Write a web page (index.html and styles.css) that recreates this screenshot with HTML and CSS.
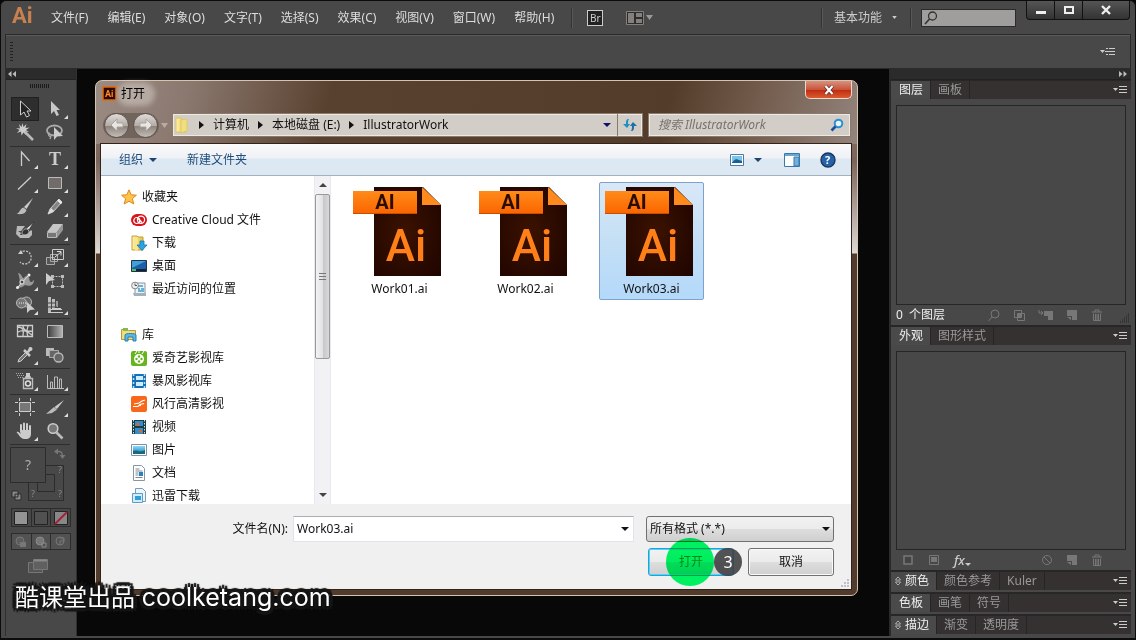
FILE: index.html
```html
<!DOCTYPE html>
<html lang="zh-CN">
<head>
<meta charset="utf-8">
<title>Illustrator - 打开</title>
<link rel="stylesheet" href="styles.css">
</head>
<body>
<svg class="defs" aria-hidden="true">
  <defs>
    <linearGradient id="g-orange" x1="0" y1="0" x2="0" y2="1"><stop offset="0" stop-color="#ff8b1a"/><stop offset="1" stop-color="#fb6400"/></linearGradient>
    <radialGradient id="g-brown" cx=".45" cy=".5" r=".7"><stop offset="0" stop-color="#3b1200"/><stop offset="1" stop-color="#200500"/></radialGradient>
    <linearGradient id="g-grey" x1="0" y1="0" x2="1" y2="0"><stop offset="0" stop-color="#3c3c3c"/><stop offset="1" stop-color="#b5b5b5"/></linearGradient>
    <linearGradient id="g-sky" x1="0" y1="0" x2="0" y2="1"><stop offset="0" stop-color="#8fd8f8"/><stop offset="1" stop-color="#1678b8"/></linearGradient>
    <linearGradient id="g-folder" x1="0" y1="0" x2="1" y2="0"><stop offset="0" stop-color="#fdf3b0"/><stop offset="1" stop-color="#e5bf45"/></linearGradient>
    <symbol id="ai-file" viewBox="0 0 88 91">
      <path d="M21 1h49l18 18v71H21z" fill="url(#g-brown)"/>
      <path d="M69 1l19 18H69z" fill="#ff8a1e"/>
      <path d="M0 5h64v23H0z" fill="url(#g-orange)"/>
      <path d="M0 27.500h64" stroke="#c25000"/>
      <text x="32" y="23" class="file-tag">AI</text>
      <text x="53" y="75" class="file-mark">Ai</text>
    </symbol>
    <symbol id="panel-menu" viewBox="0 0 14 10"><path d="M0 3h5L2.500 6z" fill="#ccc"/><path d="M6 1.500h8M6 4.500h8M6 7.500h8" stroke="#ccc"/></symbol>
    <symbol id="new-item" viewBox="0 0 12 12"><path d="M1 1h10v10H6V7H1z" fill="#777"/><path d="M1 8h4v3z" fill="#777"/></symbol>
    <symbol id="trash" viewBox="0 0 12 12"><path d="M1 3h10M4 3V1h4v2M2.500 4.500v7h7v-7M4.500 5v6M6 5v6M7.500 5v6" fill="none" stroke="#777"/></symbol>
    <symbol id="updown" viewBox="0 0 6 12"><path d="M.5 5L3 2l2.500 3zM.5 7L3 10l2.500-3z" fill="#222" stroke="#bbb"/></symbol>
  </defs>
</svg>
<div class="app">
  <header class="menubar">
    <span class="logo">Ai</span>
    <nav class="menus">
      <button>文件(F)</button><button>编辑(E)</button><button>对象(O)</button><button>文字(T)</button><button>选择(S)</button><button>效果(C)</button><button>视图(V)</button><button>窗口(W)</button><button>帮助(H)</button>
    </nav>
    <span class="divider"></span>
    <button class="bridge">Br</button>
    <button class="arrange" aria-label="排列文档">
      <svg width="28" height="16" viewBox="0 0 28 16"><path d="M.5 1.500h17v13H.5z" fill="#2d2d2d" stroke="#85807c"/><path d="M2 3h6v10H2zM10 3h6v4h-6zM10 9h6v4h-6z" fill="#85807c"/><path d="M20 5h7l-3.500 5z" fill="#999"/></svg>
    </button>
    <span class="spacer"></span>
    <span class="divider"></span>
    <button class="workspace-switch">基本功能<svg width="5" height="3" viewBox="0 0 6 4"><path d="M0 0h6L3 4z" fill="#ccc"/></svg></button>
    <span class="divider"></span>
    <label class="help-search">
      <svg width="14" height="14" viewBox="0 0 14 14"><circle cx="8.500" cy="5" r="4" fill="none" stroke="#333" stroke-width="1.300"/><path d="M5.500 8L1 13" stroke="#333" stroke-width="1.600"/></svg>
      <input type="search" aria-label="搜索帮助">
    </label>
    <div class="winbtns">
      <button aria-label="最小化"><svg width="12" height="12"><path d="M1 7h10v3H1z" fill="#eee"/></svg></button>
      <button aria-label="最大化"><svg width="12" height="12"><path d="M2 3h8v6H2z" fill="none" stroke="#eee" stroke-width="2"/></svg></button>
      <button class="wide" aria-label="关闭"><svg width="12" height="12"><path d="M2 2l8 8M10 2l-8 8" stroke="#eee" stroke-width="2.400"/></svg></button>
    </div>
  </header>
  <div class="control-bar">
    <span class="grip-v"></span>
    <button aria-label="控制面板菜单"><svg width="15" height="10" viewBox="0 0 15 10"><path d="M0 3h5L2.500 6z" fill="#ccc"/><path d="M5 4.500h4M9 1.500h6M9 4.500h6M9 7.500h6" stroke="#ccc"/><path d="M6 1h2v1H6zM6 7h2v1H6z" fill="#ccc"/></svg></button>
  </div>
  <div class="workspace">
    <aside class="tools">
      <div class="collapse left"><svg width="8" height="6" viewBox="0 0 8 6"><path d="M3.500 0v6L0 3zM8 0v6L4.500 3z" fill="#bbb"/></svg></div>
      <span class="grip-h"></span>
      <div class="tool-group">
        <button class="tool selected" aria-label="选择工具"><svg viewBox="0 0 20 20"><path d="M5.500 2v14l3.500-3 2.500 5 3-1.500-2.500-4.500H16z" fill="#222" stroke="#d0d0d0"/></svg></button>
        <button class="tool more" aria-label="直接选择工具"><svg viewBox="0 0 20 20"><path d="M6 2v13l3-3 2.500 5 2.500-1-2.500-5H15z" fill="#c8c8c8"/></svg></button>
        <button class="tool" aria-label="魔棒工具"><svg viewBox="0 0 20 20"><path d="M7.500 0l1 4 3-3-1 4 4-.5-3.500 2.500 3 2-4-.5 1.500 4-3-3-2 3-.5-4-4 1.500L4.500 7 1 5l4 .5L4 1l2.500 3z" fill="#ccc"/><path d="M10 9l8 8" stroke="#bbb" stroke-width="2.500"/></svg></button>
        <button class="tool" aria-label="套索工具"><svg viewBox="0 0 20 20"><ellipse cx="9.500" cy="7.500" rx="7.500" ry="5" fill="none" stroke="#aaa" stroke-width="1.800"/><path d="M5 10c-3 1-1 4 1 3M6 13l-1 3" fill="none" stroke="#aaa" stroke-width="1.300"/><path d="M9 4v13l3-3.500 6-.5z" fill="#ccc"/></svg></button>
      </div>
      <div class="tool-group">
        <button class="tool more" aria-label="钢笔工具"><svg viewBox="0 0 20 20"><path d="M6.500 17V3l8 9M6.500 4v7" fill="none" stroke="#ccc" stroke-width="1.300"/></svg></button>
        <button class="tool more" aria-label="文字工具"><svg viewBox="0 0 20 20"><text x="10" y="16" class="type-tool">T</text></svg></button>
        <button class="tool more" aria-label="直线段工具"><svg viewBox="0 0 20 20"><path d="M3 16.500L16 4" stroke="#ccc" stroke-width="1.300"/></svg></button>
        <button class="tool more" aria-label="矩形工具"><svg viewBox="0 0 20 20"><path d="M3.500 4.500h13v11h-13z" fill="#716c6a" stroke="#bbb"/></svg></button>
        <button class="tool" aria-label="画笔工具"><svg viewBox="0 0 20 20"><path d="M18 1l-6.500 11-2.500-2z" fill="#ccc"/><path d="M8.500 10.500l3 2.500c-1 4-5 4.500-10 4 3-1 4-6 7-6.500z" fill="#bbb"/></svg></button>
        <button class="tool more" aria-label="铅笔工具"><svg viewBox="0 0 20 20"><path d="M14 2l3 3-9 10-5 2 2-5z" fill="#858585" stroke="#ccc"/><path d="M13 3l3.500 3.500" stroke="#eee" stroke-width="2"/><path d="M6 11l3 3-6 3z" fill="#ddd"/></svg></button>
        <button class="tool" aria-label="斑点画笔工具"><svg viewBox="0 0 20 20"><path d="M2 5h8l-4 5h-3l3 2-1 2h6l5-5 1 1v4l-3 3H5l-4-4z" fill="#b8b8b8"/><path d="M19 1l-5 8-3-1.500z" fill="#ddd" stroke="#333" stroke-width=".8"/><path d="M7 13c0-4 3-5.500 5-5l2 2c0 3-3 5-7 3z" fill="#333" stroke="#bbb" stroke-width=".8"/></svg></button>
        <button class="tool more" aria-label="橡皮擦工具"><svg viewBox="0 0 20 20"><path d="M8 3h10l-6 8H2z" fill="#c5c5c5"/><path d="M2.500 11.500h9v5h-9z" fill="#777" stroke="#bbb"/><path d="M12 11l6-8v6l-6 8z" fill="#959595"/></svg></button>
      </div>
      <div class="tool-group">
        <button class="tool more" aria-label="旋转工具"><svg viewBox="0 0 20 20"><path d="M5 6a6.500 6.500 0 1 1 0 9" fill="none" stroke="#bbb" stroke-width="1.400" stroke-dasharray="2 1.200"/><path d="M3 7l3-4 2 4z" fill="#ccc"/></svg></button>
        <button class="tool more" aria-label="比例缩放工具"><svg viewBox="0 0 20 20"><path d="M1.500 10.500h8v7h-8z" fill="#555" stroke="#aaa"/><path d="M5.500 7.500v7h7v-7z" fill="none" stroke="#aaa"/><path d="M7.500 2.500h11v10h-11z" fill="none" stroke="#ccc"/><path d="M10 10l6-5M12 4.500h4v4" fill="none" stroke="#ddd"/></svg></button>
        <button class="tool more" aria-label="宽度工具"><svg viewBox="0 0 20 20"><path d="M3 2c3 0 4 4 5 5s3-4 5-2 1 6 3 6 2-2 3-2c0 5-4 7-9 5-2 2-5 3-8 3 4-3 3-10 1-15z" fill="#999"/><path d="M3 16L14 4" stroke="#ddd"/><circle cx="7" cy="11" r="2" fill="#444" stroke="#eee"/><circle cx="14" cy="4" r="1.500" fill="#eee"/><circle cx="2.500" cy="16.500" r="1.500" fill="#eee"/></svg></button>
        <button class="tool" aria-label="自由变换工具"><svg viewBox="0 0 20 20"><path d="M7.500 5.500h10v10h-10z" fill="none" stroke="#bbb" stroke-dasharray="2 1"/><path d="M6 4h3v3H6zM16 4h3v3h-3zM6 14h3v3H6zM16 14h3v3h-3z" fill="#bbb"/><path d="M1 2v12l3-4 6-1z" fill="#ccc"/></svg></button>
        <button class="tool more" aria-label="形状生成器工具"><svg viewBox="0 0 20 20"><circle cx="11.500" cy="7" r="5" fill="#666" stroke="#bbb"/><circle cx="6.500" cy="8" r="5" fill="#777" stroke="#bbb"/><path d="M4 8h8" stroke="#eee" stroke-dasharray="1 1"/><path d="M12 7v11l3-3 5-.5z" fill="#ccc"/></svg></button>
        <button class="tool more" aria-label="透视网格工具"><svg viewBox="0 0 20 20"><path d="M3 2h3v15H3zM7 4h3v9H7z" fill="#bbb"/><path d="M11 6h2v6h-2z" fill="#999"/><path d="M7 11l3 2h6v1H7zM6 14h11v1H6zM3 17h15v1H3z" fill="#ccc"/><path d="M3 8h8M3 12h9" stroke="#444"/></svg></button>
      </div>
      <div class="tool-group">
        <button class="tool" aria-label="网格工具"><svg viewBox="0 0 20 20"><path d="M2.500 4.500h15v11h-15zM3 6c5 0 6 3 5 9M8 5c0 4 4 6 9 5M3 11c5-3 9-1 14 3M13 5c-1 4-2 7 0 10" fill="none" stroke="#ccc" stroke-width="1.300"/></svg></button>
        <button class="tool" aria-label="渐变工具"><svg viewBox="0 0 20 20"><path d="M2.500 4.500h15v12h-15z" fill="url(#g-grey)" stroke="#bbb"/></svg></button>
        <button class="tool more" aria-label="吸管工具"><svg viewBox="0 0 20 20"><path d="M3 17l1-3 7-7 2 2-7 7z" fill="#777" stroke="#ccc"/><path d="M9 5l6 6M13 7l3-4" stroke="#ccc" stroke-width="2.500"/><circle cx="15.500" cy="4" r="2" fill="#ccc"/></svg></button>
        <button class="tool" aria-label="混合工具"><svg viewBox="0 0 20 20"><path d="M1 3h8v8H1z" fill="#bbb"/><path d="M4.500 5.500h9v7h-9z" fill="#666" stroke="#aaa"/><circle cx="13.500" cy="12.500" r="4.500" fill="#666" stroke="#bbb" stroke-width="1.300"/></svg></button>
      </div>
      <div class="tool-group">
        <button class="tool more" aria-label="符号喷枪工具"><svg viewBox="0 0 20 20"><path d="M8.500 7.500h9v10h-9zM10 6h6" fill="none" stroke="#bbb" stroke-width="1.400"/><path d="M11 2h4v4h-4z" fill="#ccc"/><circle cx="13" cy="12.500" r="2.500" fill="none" stroke="#ddd" stroke-width="1.500"/><path d="M1 2.500h8M2 4.500h7M3 6.500h5" stroke="#aaa" stroke-dasharray="1 1"/></svg></button>
        <button class="tool more" aria-label="柱形图工具"><svg viewBox="0 0 20 20"><path d="M2.500 4v13.500H19M5.500 17v-6h2v6M9.500 17V6h3v11M14.500 17V8h2v9" fill="none" stroke="#bbb"/></svg></button>
      </div>
      <div class="tool-group">
        <button class="tool" aria-label="画板工具"><svg viewBox="0 0 20 20"><path d="M4.500 5.500h11v9h-11z" fill="#777" stroke="#ccc"/><path d="M4.500 1v3M15.500 1v3M4.500 16v3M15.500 16v3M0 5.500h3M17 5.500h3M0 14.500h3M17 14.500h3" stroke="#ccc"/></svg></button>
        <button class="tool more" aria-label="切片工具"><svg viewBox="0 0 20 20"><path d="M19 3l-7 9-2.500-2z" fill="#ccc"/><path d="M9 10l3 2.500-5 3.500-6 1z" fill="#bbb"/></svg></button>
        <button class="tool more" aria-label="抓手工具"><svg viewBox="0 0 20 20"><path d="M6 10V4M9 9V2.500M12 9V3M15 10V5" stroke="#ccc" stroke-width="2" stroke-linecap="round"/><path d="M5 9h11v4c0 3-2 5-5 5H9c-3 0-5-4-7.500-7 2-1 3 1 4 2z" fill="#ccc"/></svg></button>
        <button class="tool" aria-label="缩放工具"><svg viewBox="0 0 20 20"><circle cx="8" cy="7.500" r="4.800" fill="#777" stroke="#ccc" stroke-width="1.600"/><path d="M11.500 11.500l6 6" stroke="#bbb" stroke-width="2.600"/></svg></button>
      </div>
      <svg class="fill-stroke" width="60" height="56" viewBox="0 0 60 56">
        <path d="M18.500 19.500h35v35h-35zM27.500 28.500h17v17h-17z" fill="none" stroke="#2c2c2c"/>
        <path d="M.5 1.500h35v35H.5z" fill="#484848" stroke="#2c2c2c"/>
        <text x="15" y="24" class="q-big">?</text><text x="48" y="27" class="q">?</text><text x="21" y="51" class="q">?</text><text x="48" y="51" class="q">?</text>
        <path d="M47 5.500h2c3 0 3.500 2 3.500 5" fill="none" stroke="#777" stroke-width="1.300"/><path d="M44 5.500l4-3v6zM49.500 9h6l-3 4z" fill="#777"/>
        <path d="M2 45h6v6H2zM5 48h6v6H5z" fill="#888" stroke="#2c2c2c"/>
      </svg>
      <div class="swatches">
        <button aria-label="颜色"><svg width="14" height="14"><path d="M.5.500h13v13H.5z" fill="#949494" stroke="#222"/></svg></button>
        <button aria-label="渐变"><svg width="14" height="14"><path d="M.5.500h13v13H.5z" fill="#515151" stroke="#222"/></svg></button>
        <button aria-label="无"><svg width="14" height="14"><path d="M.5.500h13v13H.5z" fill="#888" stroke="#222"/><path d="M1 13L13 1" stroke="#a5203c" stroke-width="2"/></svg></button>
      </div>
      <div class="swatches modes">
        <button aria-label="正常绘图"><svg width="14" height="12"><circle cx="6" cy="5" r="4" fill="#5d5d5d" stroke="#777"/><path d="M6 6h6v5H6z" fill="#777"/></svg></button>
        <button aria-label="背面绘图"><svg width="14" height="12"><circle cx="6" cy="5" r="4" fill="#777" stroke="#888"/><path d="M8 7h4v4H8z" fill="none" stroke="#888"/></svg></button>
        <button aria-label="内部绘图"><svg width="14" height="12"><circle cx="6" cy="5" r="4" fill="#555" stroke="#777"/><path d="M6 2h4v3H6v4" fill="none" stroke="#777"/></svg></button>
      </div>
      <button class="screen-mode" aria-label="更改屏幕模式"><svg width="22" height="16"><path d="M1.500 4.500h14v10h-14z" fill="#555" stroke="#777"/><path d="M6.500 1.500h14v10h-14z" fill="#606060" stroke="#777"/><path d="M7 2.500h13" stroke="#888" stroke-width="2"/></svg></button>
    </aside>

    <main class="canvas">
      <section class="dialog" role="dialog" aria-label="打开">
        <div class="titlebar">
          <svg width="15" height="15" viewBox="0 0 15 15"><path d="M1 1h13v13H1z" fill="#2a0a00" stroke="#e2690d" stroke-width="1.500"/><text x="3" y="11" class="mini-ai">Ai</text></svg>
          <h1>打开</h1>
          <button class="close" aria-label="关闭"><svg width="12" height="10" viewBox="0 0 12 10"><path d="M2.500 1l7 8M9.500 1l-7 8" stroke="#5a2a2a" stroke-width="3.600"/><path d="M2.500 1l7 8M9.500 1l-7 8" stroke="#fff" stroke-width="2.200"/></svg></button>
        </div>
        <div class="addressrow">
          <div class="travel">
            <button aria-label="后退"><svg width="16" height="14" viewBox="0 0 16 14"><path d="M8 1L2 7l6 6V9h6V5H8z" fill="#e9e5e2" stroke="#aaa39e"/></svg></button>
            <button aria-label="前进"><svg width="16" height="14" viewBox="0 0 16 14"><path d="M8 1l6 6-6 6V9H2V5h6z" fill="#e9e5e2" stroke="#aaa39e"/></svg></button>
          </div>
          <svg class="recent" width="7" height="5" viewBox="0 0 7 5"><path d="M0 0h7L3.500 5z" fill="#b9aba0"/></svg>
          <div class="crumbs">
            <svg width="16" height="18" viewBox="0 0 16 18"><path d="M2 2h5l1 2h4v12H2z" fill="url(#g-folder)" stroke="#e0c658"/><path d="M7 4l6-1v12l-6 2z" fill="#f1df7d" stroke="#dfc768"/></svg>
            <i class="tri"></i><button>计算机</button><i class="tri"></i><button>本地磁盘 (E:)</button><i class="tri"></i><button>IllustratorWork</button>
            <span class="spacer"></span>
            <button class="drop" aria-label="以前的位置"><i class="down"></i></button>
            <button class="refresh" aria-label="刷新"><svg width="16" height="14" viewBox="0 0 16 14"><path d="M7 1C4 1 4 3 4 6H1l4 4 3-4H6c0-2 0-3 1-5z" fill="#1f8fc4"/><path d="M9 13c3 0 3-2 3-5h3l-4-4-3 4h2c0 2 0 3-1 5z" fill="#1672a8"/></svg></button>
          </div>
          <label class="search">
            <input type="search" aria-label="搜索" placeholder="搜索 IllustratorWork">
            <svg width="14" height="14" viewBox="0 0 14 14"><circle cx="8.500" cy="5.500" r="3.800" fill="#e6f4fc" stroke="#2d8fce" stroke-width="2"/><path d="M5.500 8.500L1.500 12.500" stroke="#1d4f9c" stroke-width="2.600"/></svg>
          </label>
        </div>
        <div class="content">
          <div class="cmdbar">
            <button>组织<i class="down"></i></button>
            <button>新建文件夹</button>
            <span class="spacer"></span>
            <button aria-label="更改视图"><svg width="14" height="12"><path d="M.5.500h13v11H.5z" fill="#fff" stroke="#4b7ba5"/><path d="M2 2h10v5H2z" fill="#79c4ea"/><path d="M2 8l4-3 6 2v2H2z" fill="#1e5f92"/></svg></button>
            <button class="views-more" aria-label="更多选项"><i class="down"></i></button>
            <button aria-label="显示预览窗格"><svg width="16" height="14"><path d="M.5.500h15v13H.5z" fill="#fff" stroke="#3b78aa"/><path d="M1 2h14" stroke="#6ba6d2" stroke-width="2"/><path d="M10 4h5v9h-5z" fill="#6fb2dc" stroke="#3b78aa"/></svg></button>
            <button aria-label="获取帮助"><svg width="16" height="16"><circle cx="8" cy="8" r="7" fill="#2762a8" stroke="#17375f" stroke-width="1.400"/><text x="5" y="12" class="help-q">?</text></svg></button>
          </div>
          <div class="browser">
            <nav class="places">
              <a class="root" href="#"><svg viewBox="0 0 16 16"><path d="M8 .8l2.200 5 5.200.4-4 3.500 1.400 5.300L8 12.200 3.200 15l1.400-5.300-4-3.500 5.200-.4z" fill="#ffc34d" stroke="#d88a1f"/></svg>收藏夹</a>
              <a href="#"><svg viewBox="0 0 16 16"><rect y="2" width="16" height="12" rx="6" fill="#d8141b"/><g fill="none" stroke="#fff" stroke-width="1.200"><circle cx="5.800" cy="8.500" r="3"/><circle cx="10" cy="7.800" r="3.600"/></g><path d="M7 6.500l4 4" stroke="#fff" stroke-width="1.200"/></svg>Creative Cloud 文件</a>
              <a href="#"><svg viewBox="0 0 16 16"><path d="M1 1h5l1 1h5v13H1z" fill="url(#g-folder)" stroke="#c9a02c"/><path d="M4 3l3-1v13l-3 1z" fill="#f8e68e"/><path d="M9 6h4v4h3l-5 5.500L6 10h3z" fill="#27a4e6" stroke="#1573af" stroke-width=".8"/></svg>下载</a>
              <a href="#"><svg viewBox="0 0 16 16"><path d="M.5 2.500h15v11H.5z" fill="#1a5fa8" stroke="#234"/><path d="M1 3h14L1 10z" fill="#3fa0dc"/><path d="M1 12h14" stroke="#123" stroke-width="2"/><path d="M1 11h4v2H1z" fill="#52c068"/></svg>桌面</a>
              <a href="#"><svg viewBox="0 0 16 16"><path d="M5 2h9v12H4V8" fill="#edf3f8" stroke="#8796a2"/><path d="M7 5h5M7 8h2M10 8h3M7 10h6" stroke="#3d9ccc" stroke-width="1.400"/><path d="M2 12h13v3H3z" fill="#a7b1b8"/><circle cx="4" cy="4.500" r="3.400" fill="#eee" stroke="#888"/><path d="M4 2.500v2h2" fill="none" stroke="#555"/></svg>最近访问的位置</a>
              <a class="root libs" href="#"><svg viewBox="0 0 16 16"><path d="M.5 2.500h6l1 1h7v9H.5z" fill="#f3db83" stroke="#b59a3c"/><path d="M2 1h5v3H2z" fill="#87b84a"/><path d="M4 14V8c0-2 11-2 11 0v6h-3v-4H7v4z" fill="#5bb8e2" stroke="#277fae"/></svg>库</a>
              <a href="#"><svg viewBox="0 0 16 16"><rect y="1" width="16" height="15" rx="2" fill="#67b51e"/><path d="M4 4l2-3M8 3V1M11 4l2-3" stroke="#fff"/><circle cx="8" cy="9" r="5" fill="#fff"/><g fill="#67b51e"><circle cx="8" cy="6.500" r="1.200"/><circle cx="8" cy="11.500" r="1.200"/><circle cx="5.500" cy="9" r="1.200"/><circle cx="10.500" cy="9" r="1.200"/></g></svg>爱奇艺影视库</a>
              <a href="#"><svg viewBox="0 0 16 16"><path d="M1 1h14v14H1z" fill="#1670b8"/><path d="M5 3h7v4H5zM5 9h7v4H5z" fill="#cfeeff"/><path d="M2.500 1v14M13.500 1v14" stroke="#bde4fa" stroke-width="1.500" stroke-dasharray="2 2"/></svg>暴风影视库</a>
              <a href="#"><svg viewBox="0 0 16 16"><rect width="16" height="16" rx="2" fill="#f8671a"/><path d="M2 10.500h5l2-2 4-1M3 8l5-1 3-2 3-1M10 8l-1 2" fill="none" stroke="#fff" stroke-width="1.200"/></svg>风行高清影视</a>
              <a href="#"><svg viewBox="0 0 16 16"><path d="M1 1h14v14H1z" fill="#1d3c44"/><path d="M4 2h8v5H4zM4 9h8v6H4z" fill="#2f8ed0"/><path d="M4 6l3-3 2 4zM7 13l3-3 2 4z" fill="#d9682c"/><path d="M2.500 1v14M13.500 1v14" stroke="#cde6d8" stroke-dasharray="1.500 1.500"/></svg>视频</a>
              <a href="#"><svg viewBox="0 0 16 16"><path d="M.5 2.500h15v11H.5z" fill="#fff" stroke="#7d92a3"/><path d="M2 4h12v8H2z" fill="url(#g-sky)"/><path d="M2 9c4-2 7 2 12-1v4H2z" fill="#176a7c"/></svg>图片</a>
              <a href="#"><svg viewBox="0 0 16 16"><path d="M2.500.500h8l3 3v12h-11z" fill="#fff" stroke="#8796a2"/><path d="M4.500 4h4M4.500 6h7M4.500 8h3M4.500 10h3M4.500 12.500h7" stroke="#7d8a94"/><path d="M8 7h4v4H8z" fill="#2b80c0"/></svg>文档</a>
              <a href="#"><svg viewBox="0 0 16 16"><path d="M4.500.500h7l3 3v10h-10z" fill="#eaf5fc" stroke="#7a9cb8"/><path d="M1.500 5.500h10v9h-10z" fill="#d4ecfa" stroke="#5f9cc5"/><path d="M4 8h6v4H4z" fill="#2f9fdc"/></svg>迅雷下载</a>
            </nav>
            <div class="scrollbar">
              <button aria-label="向上滚动"><i class="up"></i></button>
              <div class="thumb"></div>
              <button aria-label="向下滚动"><i class="down"></i></button>
            </div>
            <div class="files">
              <button class="file"><svg width="88" height="91"><use href="#ai-file"/></svg>Work01.ai</button>
              <button class="file"><svg width="88" height="91"><use href="#ai-file"/></svg>Work02.ai</button>
              <button class="file chosen"><svg width="88" height="91"><use href="#ai-file"/></svg>Work03.ai</button>
            </div>
          </div>
          <div class="dialog-foot">
            <div class="row">
              <label for="fname">文件名(N):</label>
              <div class="combo"><input id="fname" type="text" value="Work03.ai"><button aria-label="文件名列表"><i class="down"></i></button></div>
              <div class="filter"><select aria-label="文件类型"><option>所有格式 (*.*)</option></select><i class="down"></i></div>
            </div>
            <div class="row actions">
              <div class="open-wrap"><button class="btn primary">打开</button><span class="pulse"></span><span class="step">3</span></div>
              <button class="btn">取消</button>
            </div>
            <svg class="resize" width="9" height="9"><path d="M7 1h2M4 4h2M7 4h2M1 7h2M4 7h2M7 7h2" stroke="#aab3bb" stroke-width="1.500"/></svg>
          </div>
        </div>
      </section>
    </main>

    <aside class="dock">
      <div class="collapse right"><svg width="8" height="6" viewBox="0 0 8 6"><path d="M0 0v6l3.500-3zM4.500 0v6L8 3z" fill="#bbb"/></svg></div>
      <section class="panel">
        <div class="tabs"><button class="on">图层</button><button>画板</button><svg width="14" height="10"><use href="#panel-menu"/></svg></div>
        <div class="well"></div>
        <div class="panel-foot">
          <span>0&nbsp; 个图层</span>
          <div class="foot-icons">
            <svg viewBox="0 0 12 12"><circle cx="7" cy="5" r="4" fill="none" stroke="#777"/><path d="M4 8l-3.500 4" stroke="#777"/></svg>
            <svg viewBox="0 0 12 12"><path d="M1.500 1.500h7v7h-7zM4.500 4.500h7v7h-7z" fill="none" stroke="#777"/><path d="M5 5h3v3H5z" fill="#777"/></svg>
            <svg class="w15" viewBox="0 0 15 12"><path d="M1 1v3h4M3 2l2 2-2 2" fill="none" stroke="#777"/><path d="M6 2h9v9h-5V7H6z" fill="#777"/></svg>
            <svg viewBox="0 0 12 12"><use href="#new-item"/></svg>
            <svg viewBox="0 0 12 12"><use href="#trash"/></svg>
          </div>
          <svg class="corner" viewBox="0 0 10 10"><path d="M8 1h1M6 3h3M4 5h5M2 7h7M0 9h9" stroke="#222" stroke-dasharray="1 1"/></svg>
        </div>
      </section>
      <section class="panel">
        <div class="tabs"><button class="on">外观</button><button>图形样式</button><svg width="14" height="10"><use href="#panel-menu"/></svg></div>
        <div class="well"></div>
        <div class="panel-foot">
          <div class="foot-left">
            <svg viewBox="0 0 12 12"><path d="M2 2h8v8H2z" fill="#444" stroke="#777" stroke-width="1.500"/></svg>
            <svg viewBox="0 0 12 12"><path d="M1.500 1.500h9v9h-9z" fill="none" stroke="#777"/><path d="M3 3h6v5H3z" fill="#777"/></svg>
            <button class="fx">fx<i class="down"></i></button>
          </div>
          <div class="foot-icons">
            <svg viewBox="0 0 12 12"><circle cx="6" cy="6" r="4.500" fill="none" stroke="#777"/><path d="M3 3l6 6" stroke="#777"/></svg>
            <svg viewBox="0 0 12 12"><use href="#new-item"/></svg>
            <svg viewBox="0 0 12 12"><use href="#trash"/></svg>
          </div>
          <span class="corner"></span>
        </div>
      </section>
      <section class="slim"><div class="tabs"><button class="on tight"><svg width="6" height="12"><use href="#updown"/></svg>颜色</button><button>颜色参考</button><button>Kuler</button><svg width="14" height="10"><use href="#panel-menu"/></svg></div></section>
      <section class="slim"><div class="tabs"><button class="on">色板</button><button>画笔</button><button>符号</button><svg width="14" height="10"><use href="#panel-menu"/></svg></div></section>
      <section class="slim"><div class="tabs"><button class="on tight"><svg width="6" height="12"><use href="#updown"/></svg>描边</button><button>渐变</button><button>透明度</button><svg width="14" height="10"><use href="#panel-menu"/></svg></div></section>
    </aside>
  </div>
  <p class="watermark">酷课堂出品 <span>coolketang.com</span></p>
</div>
</body>
</html>
```
FILE: styles.css
```css
* { box-sizing: border-box; }
body { margin: 0; background: #080808; font: 12px/16px "Noto Sans", "Noto Sans CJK SC", sans-serif; color: #ddd; }
button { margin: 0; padding: 0; border: 0; background: none; font: inherit; color: inherit; display: flex; align-items: center; justify-content: center; white-space: nowrap; }
input, select { font: inherit; color: inherit; }
svg { display: block; flex: none; }
.defs { position: absolute; width: 0; height: 0; }
.spacer { flex: 1; }
.down { border: 4px solid transparent; border-top: 4px solid #111; border-bottom: 0; }
.up { border: 4px solid transparent; border-bottom: 4px solid #444; border-top: 0; }
.tri { border: 4px solid transparent; border-left: 5px solid #111; border-right: 0; }

.app { position: relative; height: 100vh; min-height: 600px; display: flex; flex-direction: column; background: #484848; border: 1px solid #0c0c0c; border-bottom-width: 2px; border-radius: 6px 6px 0 0; padding: 0 4px 2px; }

/* menu bar */
.menubar { height: 33px; flex: none; display: flex; align-items: center; }
.logo { align-self: flex-start; width: 38px; margin-left: 7px; font: bold 22px/30px Roboto, "Open Sans", sans-serif; color: #c8814e; }
.menus { display: flex; gap: 19px; margin: 0 3px 0 1px; }
.divider { width: 2px; height: 20px; margin: 0 14px; border-left: 1px solid #333; border-right: 1px solid #585858; }
.menubar .bridge { width: 16px; height: 16px; background: #222; border: 1px solid #ccc; font: 10px/12px "Noto Sans", sans-serif; color: #ccc; }
.arrange { margin-left: 23px; }
.workspace-switch { gap: 10px; color: #ccc; margin-left: -3px; }
.workspace-switch + .divider { margin: 0 9px 0 13px; }
.help-search { width: 95px; height: 18px; background: #a09e9d; border: 1px solid #2b2b2b; display: flex; align-items: center; padding-left: 2px; }
.help-search input { width: 70px; border: 0; background: none; outline: 0; }
.winbtns { display: flex; align-self: flex-start; margin: 0 1px 0 10px; border: 1px solid #111; border-top: 0; border-radius: 0 0 4px 4px; background: linear-gradient(#555, #333); }
.winbtns button { width: 28px; height: 18px; border-right: 1px solid #111; }
.winbtns .wide { width: 46px; border-right: 0; }
.control-bar { height: 35px; flex: none; display: flex; align-items: center; justify-content: space-between; padding: 0 15px 0 4px; border: 1px solid #2a2a2a; box-shadow: inset 0 1px #5a5a5a; }
.grip-v { width: 3px; height: 20px; background: repeating-linear-gradient(#222 0 1px, #484848 1px 3px); }

.workspace { flex: 1; min-height: 0; display: flex; }
.collapse { height: 11px; flex: none; display: flex; align-items: center; background: #2b2b2b; padding: 0 4px; border-bottom: 1px solid #222; }
.collapse.right { justify-content: flex-end; }

/* tools */
.tools { width: 72px; flex: none; display: flex; flex-direction: column; border-right: 1px solid #303030; border-left: 1px solid #303030; }
.collapse.left { padding-left: 2px; }
.grip-h { width: 20px; height: 4px; margin: 4px 0 9px 24px; flex: none; background: repeating-linear-gradient(90deg, #1c1c1c 0 1px, #484848 1px 2px); }
.tool-group { display: grid; grid-template-columns: 30px 30px; margin: 0 6px 0 4px; flex: none; border-bottom: 1px solid #2e2e2e; padding-bottom: 1px; }
.tool { height: 24px; position: relative; border: 1px solid transparent; }
.tool svg { width: 20px; height: 20px; }
.tool.selected { background: #2e2e2e; border-color: #202020; width: 28px; margin-left: 1px; }
.tool.more::after { content: ""; position: absolute; right: 1px; bottom: 1px; border: 2px solid transparent; border-right-color: #ddd; border-bottom-color: #ddd; }
.type-tool { font: bold 18px "Liberation Serif", serif; text-anchor: middle; fill: #ccc; }
.fill-stroke { margin: 1px 4px 6px; }
.q-big { font: 14px "Noto Sans", sans-serif; fill: #aaa; }
.q { font: 9px "Noto Sans", sans-serif; fill: #888; }
.swatches { display: flex; flex: none; margin: 0 5px 6px; border: 1px solid #2c2c2c; height: 19px; }
.swatches button { flex: 1; }
.swatches button + button { border-left: 1px solid #2c2c2c; }
.swatches.modes { height: 17px; background: #525252; margin-bottom: 8px; }
.screen-mode { align-self: center; margin-right: 6px; }

/* dialog window */
.canvas { flex: 1; min-width: 0; display: flex; background: #080808; padding: 11px 31px 40px 18px; }
.dialog { flex: 1; min-width: 0; display: flex; flex-direction: column; padding: 0 5px 5px 4px; border: 1px solid #d6c3b2; border-radius: 7px; color: #111;
  background: linear-gradient(105deg, #9a8b83 0, #8b7970 90px, #59412f 230px, #533d2a 560px, #725a4b 640px, #958780 760px) 0 0 / 100% 63px no-repeat, linear-gradient(#8d7c73, #7b655b 80px, #ddd8d5 172px, #513b2c 173px); }
.titlebar { height: 32px; flex: none; display: flex; align-items: flex-start; padding: 5px 0 0 2px; gap: 4px; }
.titlebar h1 { margin: 0; padding: 0 6px 0 0; font: 12px/16px "Noto Sans", "Noto Sans CJK SC", sans-serif; color: #000; background: rgba(235, 230, 225, .4); box-shadow: 0 0 5px 4px rgba(235, 230, 225, .4); border-radius: 8px; }
.close { width: 47px; height: 18px; margin: -5px 0 0 auto; border: 1px solid #f0d6c8; border-top: 0; border-radius: 0 0 5px 5px; background: linear-gradient(#d8907c, #c8553b 50%, #c02a10 52%, #d85c30); }
.addressrow { height: 24px; flex: none; display: flex; align-items: center; padding: 0 1px 0 3px; margin-bottom: 6px; }
.travel { display: flex; gap: 4px; border-radius: 13px; background: #71645c; padding: 0 1px; }
.travel button { width: 25px; height: 25px; border-radius: 13px; border: 1px solid #5f534c; background: linear-gradient(#e0dcd9, #b4aca7 50%, #8c827c 52%, #c4bdb8); }
.recent { margin: 0 4px 0 2px; }
.crumbs, .search { height: 24px; display: flex; align-items: center; border: 1px solid #8a7a6e; box-shadow: inset 0 0 0 1px #efe9e4; background: #d3cdc8; color: #111; }
.crumbs { flex: 1; min-width: 0; padding-left: 1px; }
.crumbs .tri { margin: 0 9px; }
.crumbs .down { border-top-color: #10106a; }
.drop { width: 20px; }
.refresh { align-self: stretch; width: 25px; border-left: 1px solid #8a7a6e; }
.search { width: 203px; margin-left: 5px; padding: 0 6px 0 9px; }
.search input { flex: 1; min-width: 0; padding: 0; border: 0; background: none; outline: 0; }
.search input::placeholder { color: #77716d; font-style: italic; opacity: 1; }
.content { flex: 1; min-height: 0; display: flex; flex-direction: column; border: 1px solid #33231a; background: #fff; }
.cmdbar { height: 32px; flex: none; display: flex; align-items: center; padding: 0 15px 0 18px; color: #1e4e7c; border-bottom: 1px solid #9eb2c4; background: linear-gradient(#fbfafb, #eff1f5 45%, #dce8f3 50%, #dde8f2); }
.cmdbar > button:first-child { gap: 6px; margin-right: 30px; }
.cmdbar .down { border-top-color: #1b4470; }
.views-more { margin: 0 22px 0 10px; }
.cmdbar > button:last-child { margin-left: 20px; }
.browser { flex: 1; min-height: 0; display: flex; }
.places { width: 213px; flex: none; overflow: hidden; padding: 9px 0 0 30px; }
.places a { display: flex; align-items: center; gap: 5px; height: 23px; color: #111; text-decoration: none; white-space: nowrap; }
.places svg { width: 16px; height: 16px; }
.places .root { margin-left: -10px; }
.places .libs { margin-top: 23px; }
.scrollbar { width: 17px; flex: none; display: flex; flex-direction: column; background: #f2f2f4; border: 1px solid #e4eaf3; border-width: 0 1px; }
.scrollbar button { height: 18px; flex: none; }
.scrollbar button:last-child { margin-top: auto; }
.scrollbar .down { border-top-color: #444; }
.thumb { height: 165px; border: 1px solid #999; border-radius: 2px; background: repeating-linear-gradient(#777 0 1px, transparent 1px 3px) center / 7px 7px no-repeat, linear-gradient(90deg, #f3f3f3, #e2e2e2 50%, #c8c8ca 55%, #d8d8d8); }
.files { flex: 1; display: flex; align-items: flex-start; gap: 21px; padding: 6px 16px; }
.file { width: 105px; height: 118px; flex-direction: column; justify-content: flex-start; gap: 4px; padding: 3px 5px 0; border: 1px solid transparent; border-radius: 2px; }
.file svg { align-self: flex-start; }
.file.chosen { border-color: #7da2ce; background: linear-gradient(#d9e8f7, #c4dff5 50%, #b4d9fa); }
.file-tag { font: bold 20px Roboto, "Liberation Sans", sans-serif; fill: #2a0c00; text-anchor: middle; }
.file-mark { font: 500 44px Roboto, "Liberation Sans", sans-serif; fill: #ff7f18; text-anchor: middle; }
.mini-ai { font: bold 9px Roboto, "Liberation Sans", sans-serif; fill: #ff8a2a; }
.help-q { font: bold 11px "Noto Sans", sans-serif; fill: #fff; }

.dialog-foot { height: 85px; flex: none; position: relative; background: #f0f0f0; padding: 12px 17px 0; }
.row { display: flex; align-items: center; justify-content: flex-end; }
.row label { margin-right: 5px; }
.combo { width: 341px; height: 26px; display: flex; background: #fff; border: 1px solid #e2e3ea; border-top-color: #abadb3; }
.combo input { flex: 1; min-width: 0; padding: 0 3px; border: 0; outline: 0; background: none; }
.combo button { width: 16px; }
.filter { position: relative; width: 188px; margin-left: 12px; }
.filter select { width: 100%; height: 26px; appearance: none; padding: 0 3px; border: 1px solid #707070; border-radius: 3px; background: linear-gradient(#f2f2f2, #ebebeb 50%, #ddd 52%, #cfcfcf); }
.filter .down { position: absolute; right: 4px; top: 11px; }
.actions { gap: 14px; margin-top: 6px; }
.btn { width: 86px; height: 28px; border: 1px solid #707070; border-radius: 3px; box-shadow: inset 0 0 0 1px #fafafa; background: linear-gradient(#f2f2f2, #ebebeb 50%, #ddd 52%, #cfcfcf); }
.primary { border-color: #2a9fd6; box-shadow: inset 0 0 0 1px #48d8fb; color: #3c8a20; }
.open-wrap { position: relative; }
.pulse { position: absolute; left: 18px; top: -10px; width: 48px; height: 48px; border-radius: 50%; background: #00ff68; mix-blend-mode: multiply; }
.pulse::after { content: ""; display: block; height: 100%; border-radius: 50%; background: rgba(0, 255, 104, .3); }
.step { position: absolute; left: 66px; top: 0; width: 28px; height: 28px; border-radius: 50%; background: rgba(60, 60, 64, .88); color: #fff; font: 16px/28px "Noto Sans", sans-serif; text-align: center; }
.resize { position: absolute; right: 2px; bottom: 1px; }

/* dock */
.dock { width: 242px; flex: none; display: flex; flex-direction: column; border: 1px solid #2a2a2a; border-width: 0 0 0 2px; }
.panel { flex: 1; min-height: 0; display: flex; flex-direction: column; border-top: 2px solid #272727; }
.collapse + .panel { border-top-width: 1px; }
.tabs { display: flex; height: 18px; flex: none; background: #343130; color: #999; padding-right: 4px; }
.tabs button { padding: 0 7px; border-right: 1px solid #252525; }
.tabs .on { background: #4a4a4a; color: #eee; padding: 0 7px 0 8px; }
.tabs .tight { gap: 4px; padding-left: 4px; }
.tabs > svg { margin: auto 0 auto auto; }
.well { flex: 1; margin: 6px 5px 0; border: 1px solid #262626; }
.panel-foot { height: 20px; flex: none; display: flex; align-items: center; justify-content: space-between; padding-left: 5px; color: #eee; }
.foot-icons { display: flex; gap: 13px; margin-left: auto; }
.foot-icons svg, .foot-left svg { width: 12px; height: 12px; }
.foot-icons .w15 { width: 15px; }
.corner { width: 10px; height: 10px; margin: 6px 1px 0 17px; }
.foot-left { display: flex; align-items: center; gap: 14px; padding-left: 6px; }
.fx { font: italic 500 13px/16px "Noto Sans", sans-serif; color: #ccc; }
.fx .down { border-width: 3px 3px 0; border-top-color: #ccc; margin-top: 8px; }
.slim { flex: none; border-top: 2px solid #272727; }
.slim .tabs { height: 20px; border-bottom: 2px solid #484848; }

.watermark { position: absolute; left: 14px; bottom: 22px; margin: 0; font: 24px/36px Inter, "Noto Sans CJK SC", sans-serif; color: #fff; white-space: nowrap;
  text-shadow: 0 0 3px #111, 4px 0 1px #161616, -4px 0 1px #161616, 3px 3px 1px #161616, -3px 3px 1px #161616, 3px -3px 1px #161616, -3px -3px 1px #161616, 0 4px 1px #161616, 0 -4px 1px #161616; }
.watermark span { font-size: 25px; }
```
